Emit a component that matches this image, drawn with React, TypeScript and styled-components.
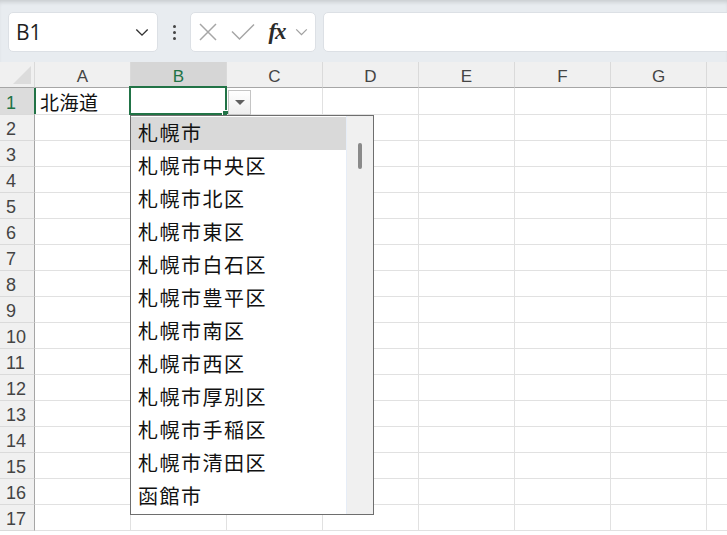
import React from 'react';
import styled, { createGlobalStyle } from 'styled-components';

const GlobalStyle = createGlobalStyle`
    html, body {
        margin: 0;
        padding: 0;
        background: #ffffff;
    }
    body {
        font-family: "Noto Sans", "Noto Sans CJK JP", sans-serif;
    }
`;

const Window = styled.div`
    width: 727px;
    height: 535px;
    overflow: hidden;
    position: relative;
    background: #ffffff;
`;

const Bar = styled.div`
    height: 62px;
    box-sizing: border-box;
    padding: 12px 0 10px 8px;
    display: flex;
    align-items: stretch;
    background: #e8ecf0;
    box-shadow: inset 0 4px 4px -2px rgba(0, 0, 0, 0.14);
`;

const Box = styled.div<{ $w?: number }>`
    background: #ffffff;
    border: 1px solid #dce0e5;
    border-radius: 5px;
    box-sizing: border-box;
    display: flex;
    align-items: center;
    ${p => (p.$w ? `width: ${p.$w}px; flex: none;` : 'flex: 1; margin-right: -8px;')}
`;

const NameText = styled.span`
    font-family: "Open Sans", "Noto Sans", sans-serif;
    font-size: 21px;
    color: #1f1f1f;
    padding-left: 7px;
    flex: 1;
`;

const Dots = styled.div`
    width: 32px;
    display: flex;
    flex-direction: column;
    align-items: center;
    justify-content: center;
    gap: 3px;
    span {
        width: 3px;
        height: 3px;
        border-radius: 50%;
        background: #444;
    }
`;

const Icon = styled.div<{ $w: number }>`
    width: ${p => p.$w}px;
    display: flex;
    align-items: center;
    justify-content: center;
`;

const Fx = styled.span`
    font-family: "Liberation Serif", serif;
    font-style: italic;
    font-weight: bold;
    font-size: 23px;
    color: #2b2b2b;
    letter-spacing: -1px;
`;

const Sheet = styled.div`
    display: grid;
    grid-template-columns: 35px repeat(8, 96px);
    grid-template-rows: 26px 27px repeat(16, 26px);
`;

const Corner = styled.div`
    background: #f0f0f0;
    border-right: 1px solid #dadada;
    border-bottom: 1px solid #a6a6a6;
    position: relative;
    &::after {
        content: '';
        position: absolute;
        right: 3px;
        bottom: 3px;
        width: 0;
        height: 0;
        border-left: 18px solid transparent;
        border-bottom: 18px solid #dcdcdc;
    }
`;

const ColHead = styled.div<{ $active?: boolean }>`
    background: ${p => (p.$active ? '#d6d6d6' : '#f0f0f0')};
    color: ${p => (p.$active ? '#217346' : '#444')};
    border-right: 1px solid #dadada;
    border-bottom: 1px solid #a6a6a6;
    display: flex;
    align-items: center;
    justify-content: center;
    font-family: "Liberation Sans", sans-serif;
    font-size: 17px;
    padding-top: 4px;
    box-sizing: border-box;
`;

const RowHead = styled.div<{ $active?: boolean }>`
    background: ${p => (p.$active ? '#dcdcdc' : '#f0f0f0')};
    color: ${p => (p.$active ? '#217346' : '#444')};
    border-right: ${p => (p.$active ? '2px solid #217346' : '1px solid #a6a6a6')};
    border-bottom: 1px solid #dadada;
    display: flex;
    align-items: center;
    padding-left: 6px;
    padding-top: 4px;
    font-family: "Liberation Sans", sans-serif;
    font-size: 18px;
    box-sizing: border-box;
    margin-right: ${p => (p.$active ? '-1px' : '0')};
`;

const Cell = styled.div`
    border-right: 1px solid #e1e1e1;
    border-bottom: 1px solid #e1e1e1;
    box-sizing: border-box;
    display: flex;
    align-items: center;
    padding-left: 5px;
    padding-top: 1px;
    font-family: "Noto Sans CJK JP", sans-serif;
    font-size: 19px;
    letter-spacing: 0.5px;
    color: #111;
    position: relative;
    white-space: nowrap;
`;

const Selection = styled.div`
    position: absolute;
    left: -2px;
    top: -2px;
    right: -1px;
    bottom: -1px;
    border: 2px solid #217346;
    pointer-events: none;
    &::after {
        content: '';
        position: absolute;
        right: -4px;
        bottom: -4px;
        width: 5px;
        height: 5px;
        background: #217346;
        border: 1px solid #fff;
    }
`;

const ArrowButton = styled.div`
    position: absolute;
    left: 228px;
    top: 90px;
    width: 23px;
    height: 25px;
    box-sizing: border-box;
    border: 1px solid #c4c4c4;
    background: linear-gradient(#ffffff, #eeeeee);
    display: flex;
    align-items: center;
    justify-content: center;
    &::after {
        content: '';
        border-left: 5px solid transparent;
        border-right: 5px solid transparent;
        border-top: 5px solid #5f5f5f;
    }
`;

const List = styled.div`
    position: absolute;
    left: 130px;
    top: 115px;
    width: 244px;
    height: 400px;
    box-sizing: border-box;
    border: 1px solid #6e6e6e;
    background: #ffffff;
    display: flex;
`;

const Items = styled.div`
    flex: 1;
    padding-top: 1px;
`;

const Item = styled.div<{ $hot?: boolean }>`
    height: 33px;
    display: flex;
    align-items: center;
    padding-left: 7px;
    padding-bottom: 3px;
    box-sizing: border-box;
    font-family: "Noto Sans CJK JP", sans-serif;
    font-size: 20px;
    letter-spacing: 1.5px;
    color: #111;
    background: ${p => (p.$hot ? '#d9d9d9' : 'transparent')};
`;

const Scroll = styled.div`
    width: 26px;
    background: #f0f0f0;
    border-left: 1px solid #e6edf7;
    position: relative;
`;

const Thumb = styled.div`
    position: absolute;
    left: 11px;
    top: 27px;
    width: 4px;
    height: 26px;
    border-radius: 2px;
    background: #8a8a8a;
`;

// the 8th column runs past the window edge, so its label is out of view
const cols = ['A', 'B', 'C', 'D', 'E', 'F', 'G', ''];

const options = [
    '札幌市',
    '札幌市中央区',
    '札幌市北区',
    '札幌市東区',
    '札幌市白石区',
    '札幌市豊平区',
    '札幌市南区',
    '札幌市西区',
    '札幌市厚別区',
    '札幌市手稲区',
    '札幌市清田区',
    '函館市',
];

const Chevron = ({ size, color }: { size: number; color: string }) => (
    <svg width={size} height={size / 2 + 2} viewBox="0 0 16 10">
        <path d="M1.5 1.5 L8 8 L14.5 1.5" fill="none" stroke={color} strokeWidth="1.6" />
    </svg>
);

export default function App() {
    const rows = Array.from({ length: 17 }, (_, i) => i + 1);
    return (
        <Window>
            <GlobalStyle />
            <Bar>
                <Box $w={150}>
                    <NameText>B1</NameText>
                    <Icon $w={30}>
                        <Chevron size={14} color="#333" />
                    </Icon>
                </Box>
                <Dots>
                    <span />
                    <span />
                    <span />
                </Dots>
                <Box $w={126}>
                    <Icon $w={34}>
                        <svg width="20" height="20" viewBox="0 0 20 20">
                            <path d="M2 2 L18 18 M18 2 L2 18" stroke="#a6a6a6" strokeWidth="1.5" fill="none" />
                        </svg>
                    </Icon>
                    <Icon $w={36}>
                        <svg width="24" height="18" viewBox="0 0 24 18">
                            <path d="M1 8.5 L8.5 16 L23 1.5" stroke="#a6a6a6" strokeWidth="1.5" fill="none" />
                        </svg>
                    </Icon>
                    <Icon $w={32}>
                        <Fx>fx</Fx>
                    </Icon>
                    <Icon $w={16}>
                        <Chevron size={13} color="#a0a0a0" />
                    </Icon>
                </Box>
                <Box style={{ marginLeft: 7 }} />
            </Bar>
            <Sheet>
                <Corner />
                {cols.map((c, i) => (
                    <ColHead key={i} $active={c === 'B'}>{c}</ColHead>
                ))}
                {rows.map(r => (
                    <React.Fragment key={r}>
                        <RowHead $active={r === 1}>{r}</RowHead>
                        {cols.map((c, i) => (
                            <Cell key={i}>
                                {r === 1 && c === 'A' ? '北海道' : null}
                                {r === 1 && c === 'B' ? <Selection /> : null}
                            </Cell>
                        ))}
                    </React.Fragment>
                ))}
            </Sheet>
            <ArrowButton />
            <List>
                <Items>
                    {options.map((o, i) => (
                        <Item key={o} $hot={i === 0}>{o}</Item>
                    ))}
                </Items>
                <Scroll>
                    <Thumb />
                </Scroll>
            </List>
        </Window>
    );
}
